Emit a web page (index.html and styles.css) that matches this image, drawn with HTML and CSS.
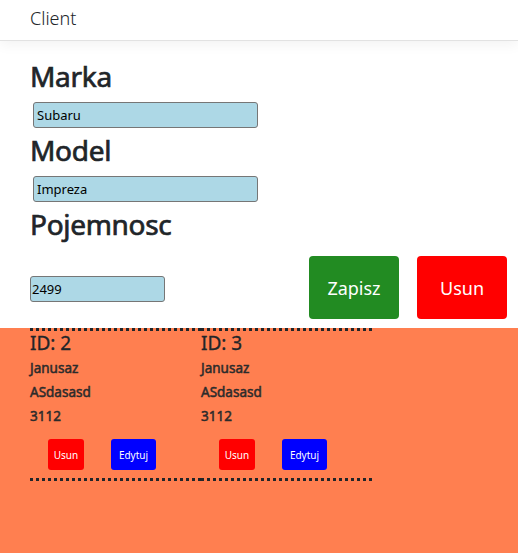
FILE: index.html
```html
<!DOCTYPE html>
<html lang="pl">
<head>
<meta charset="utf-8">
<title>Client</title>
<link rel="stylesheet" href="styles.css">
</head>
<body>
<nav class="navbar"><span class="brand">Client</span></nav>
<main class="form">
  <h1 class="label">Marka</h1>
  <input class="field field-wide" type="text" value="Subaru">
  <h1 class="label">Model</h1>
  <input class="field field-wide" type="text" value="Impreza">
  <h1 class="label">Pojemnosc</h1>
  <div class="form-row">
    <input class="field field-short" type="text" value="2499">
    <button class="btn btn-save">Zapisz</button>
    <button class="btn btn-delete">Usun</button>
  </div>
</main>
<section class="list">
  <div class="card">
    <h5 class="card-id">ID: 2</h5>
    <p class="card-line">Janusaz</p>
    <p class="card-line">ASdasasd</p>
    <p class="card-line">3112</p>
    <div class="card-actions">
      <button class="sbtn sbtn-del">Usun</button>
      <button class="sbtn sbtn-edit">Edytuj</button>
    </div>
  </div>
  <div class="card">
    <h5 class="card-id">ID: 3</h5>
    <p class="card-line">Janusaz</p>
    <p class="card-line">ASdasasd</p>
    <p class="card-line">3112</p>
    <div class="card-actions">
      <button class="sbtn sbtn-del">Usun</button>
      <button class="sbtn sbtn-edit">Edytuj</button>
    </div>
  </div>
</section>
</body>
</html>
```
FILE: styles.css
```css
html, body {
  height: 100%;
}
body {
  margin: 0;
  font-family: "Noto Sans", "Open Sans", sans-serif;
  color: #212529;
  background: #fff;
  display: flex;
  flex-direction: column;
}
.navbar {
  height: 41px;
  box-sizing: border-box;
  border-bottom: 1px solid #e2e2e2;
  box-shadow: 0 4px 12px rgba(0, 0, 0, 0.05);
  display: flex;
  align-items: center;
  padding-left: 30px;
  padding-bottom: 5px;
}
.brand {
  font-size: 18px;
  font-weight: 300;
  color: #212529;
}
.form {
  display: flex;
  flex-direction: column;
  align-items: flex-start;
  padding: 17px 11px 0 30px;
}
.label {
  margin: 0 0 8px 0;
  font-size: 28px;
  font-weight: 400;
  -webkit-text-stroke: 0.7px #212529;
  line-height: 36px;
  letter-spacing: -0.3px;
}
.field {
  box-sizing: border-box;
  height: 26px;
  background: #add8e6;
  border: 1px solid #767676;
  border-radius: 3px;
  font-family: "Noto Sans", sans-serif;
  font-size: 13px;
  color: #000;
  padding: 0 3px;
}
.field-wide {
  width: 225px;
  margin: 0 0 4px 3px;
}
.field-short {
  width: 135px;
  padding: 0 1px;
  margin-top: 3px;
}
.form-row {
  align-self: stretch;
  display: flex;
  align-items: center;
  gap: 18px;
  margin-top: 6px;
}
.btn {
  width: 90px;
  height: 63px;
  border: 0;
  border-radius: 4px;
  color: #fff;
  font-family: "Noto Sans", sans-serif;
  font-size: 18px;
  padding: 0;
}
.btn-save {
  margin-left: auto;
  background: #228b22;
}
.btn-delete {
  background: #ff0000;
}
.list {
  flex: 1;
  margin-top: 9px;
  background: #ff7f50;
  display: flex;
  align-items: flex-start;
  padding-left: 30px;
}
.card {
  width: 171px;
  box-sizing: border-box;
  border-top: 3px dotted #212529;
  border-bottom: 3px dotted #212529;
  padding-bottom: 8px;
}
.card-id {
  margin: 0 0 1px 0;
  font-size: 19px;
  font-weight: 400;
  -webkit-text-stroke: 0.3px #212529;
  line-height: 24px;
}
.card-line {
  margin: 0;
  font-size: 13.5px;
  font-weight: 400;
  -webkit-text-stroke: 0.5px #2b2b2b;
  line-height: 24px;
  color: #2b2b2b;
}
.card-line:first-of-type {
  margin-top: 1px;
}
.card-actions {
  display: flex;
  gap: 27px;
  padding-left: 18px;
  margin-top: 11px;
}
.sbtn {
  height: 31px;
  border: 0;
  border-radius: 3px;
  color: #fff;
  font-family: "Noto Sans", sans-serif;
  font-size: 10px;
  padding: 0;
}
.sbtn-del {
  width: 36px;
  background: #ff0000;
}
.sbtn-edit {
  width: 45px;
  background: #0000ff;
}
```
